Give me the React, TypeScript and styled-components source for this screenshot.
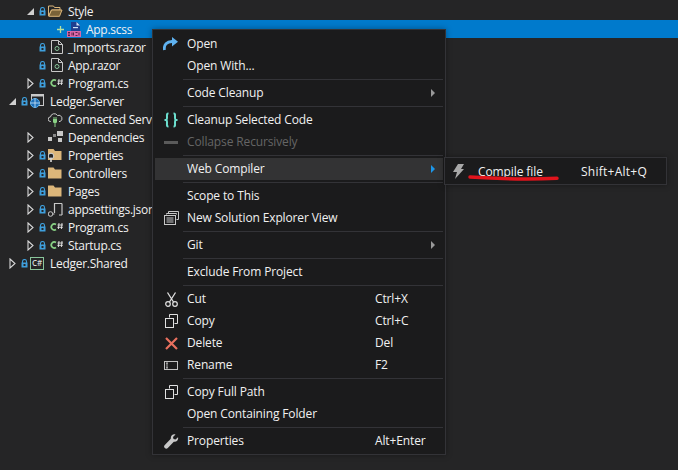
import React from "react";
import styled, { createGlobalStyle } from "styled-components";

const Global = createGlobalStyle`
  html, body { margin: 0; padding: 0; background: #252526; }
  body { font-family: "Open Sans", "Noto Sans", sans-serif; font-size: 12px; overflow: hidden; }
`;

const Page = styled.div`
  position: relative;
  width: 678px;
  height: 470px;
  overflow: hidden;
  background: #252526;
  color: #f1f1f1;
`;

const Tree = styled.div`
  display: flex;
  flex-direction: column;
  padding-top: 2px;
`;

const Row = styled.div<{ $depth: number; $selected?: boolean }>`
  display: flex;
  align-items: center;
  height: 18px;
  padding-left: ${(p) => p.$depth}px;
  background: ${(p) => (p.$selected ? "#007acc" : "transparent")};
  white-space: nowrap;
`;

const Slot = styled.span<{ $w: number }>`
  display: inline-flex;
  align-items: center;
  justify-content: center;
  width: ${(p) => p.$w}px;
  height: 18px;
  flex: none;
`;

const RowLabel = styled.span`
  margin-left: 3px;
  font-size: 12px;
  letter-spacing: -0.28px;
  color: #f1f1f1;
`;

const Menu = styled.div`
  position: absolute;
  left: 152px;
  top: 29px;
  width: 294px;
  box-sizing: border-box;
  padding: 3px 2px 2px;
  background: #1b1b1c;
  border: 1px solid #333337;
  box-shadow: 0 0 6px rgba(0, 0, 0, 0.35);
  display: flex;
  flex-direction: column;
`;

const Item = styled.div<{ $hover?: boolean; $disabled?: boolean }>`
  display: grid;
  grid-template-columns: 32px 188px 1fr 12px;
  grid-template-rows: 22px;
  align-items: start;
  height: 22px;
  line-height: 21px;
  background: ${(p) => (p.$hover ? "#333334" : "transparent")};
  color: ${(p) => (p.$disabled ? "#656565" : "#f1f1f1")};
  letter-spacing: -0.13px;
  white-space: nowrap;
`;

const IconCell = styled.span<{ $shift?: number }>`
  display: flex;
  align-items: center;
  justify-content: center;
  height: 22px;
  align-self: center;
  padding-right: ${(p) => p.$shift ?? 0}px;
`;

const Shortcut = styled.span`
  color: #f1f1f1;
`;

const SubShortcut = styled(Shortcut)`
  letter-spacing: 0.25px;
`;

const Arrow = styled.span<{ $blue?: boolean }>`
  width: 0;
  height: 0;
  border-left: 4px solid ${(p) => (p.$blue ? "#1c97ea" : "#999999")};
  border-top: 4px solid transparent;
  border-bottom: 4px solid transparent;
  justify-self: start;
  align-self: center;
`;

const Separator = styled.div`
  height: 1px;
  margin: 2px 0 2px 28px;
  background: #333337;
`;

const Submenu = styled.div`
  position: absolute;
  left: 444px;
  top: 157px;
  width: 223px;
  height: 28px;
  box-sizing: border-box;
  padding: 2px 2px;
  background: #1b1b1c;
  border: 1px solid #333337;
  box-shadow: 0 0 6px rgba(0, 0, 0, 0.35);
  display: grid;
  grid-template-columns: 31px 103px 1fr;
  grid-template-rows: 22px;
  align-items: center;
  letter-spacing: -0.1px;
  white-space: nowrap;
`;

const Scribble = styled.svg`
  position: absolute;
  left: 468px;
  top: 172px;
  pointer-events: none;
`;

const SharedBox = styled.span`
  display: flex;
  align-items: center;
  justify-content: center;
  width: 14px;
  height: 11px;
  margin-right: 3px;
  border: 1px solid #89c59a;
  font-size: 8px;
  font-weight: 600;
  line-height: 1;
  color: #d8d8d8;
  letter-spacing: -0.2px;
`;

const S = { fill: "none", stroke: "#e0e0e0", strokeWidth: 1 };

const Lock = () => (
  <svg width="7" height="9" viewBox="0 0 7 9">
    <path d="M1.500 4V2.500a2 2 0 0 1 4 0V4" fill="none" stroke="#3f9fdc" strokeWidth="1.100" />
    <rect x="0.500" y="3.500" width="6" height="5" fill="#3f9fdc" />
    <rect x="2.500" y="5" width="2" height="2" fill="#252526" />
  </svg>
);

const Open = () => (
  <svg width="9" height="9" viewBox="0 0 9 9">
    <path d="M8 1V8H1Z" fill="#d0d0d0" />
  </svg>
);

const Closed = () => (
  <svg width="7" height="11" viewBox="0 0 7 11">
    <path d="M1 1L6 5.500L1 10Z" fill="#252526" stroke="#d8d8d8" strokeWidth="1.100" />
  </svg>
);

const Folder = ({ open }: { open?: boolean }) => (
  <svg width="17" height="12" viewBox="0 0 17 12">
    {open ? (
      <>
        <path d="M.5 1h5l1 1.500h5.500v2.500H3.500L.5 11z" fill="#252526" stroke="#dcb67a" />
        <path d="M.8 11.300L3.500 5H14L11.500 11.300z" fill="#7a6238" stroke="#dcb67a" />
      </>
    ) : (
      <path d="M0 .5h5.500l1.500 2h6.500v9H0z" fill="#dcb67a" />
    )}
  </svg>
);

const PropFolder = () => (
  <svg width="17" height="16" viewBox="0 0 17 16">
    <path d="M0 2h5.500l1.500 2h6.500v9H0z" fill="#dcb67a" />
    <circle cx="3" cy="9" r="2.800" fill="#252526" stroke="#d8d8d8" />
    <rect x="2.200" y="10.500" width="1.600" height="4.500" fill="#d8d8d8" />
  </svg>
);

const Razor = () => (
  <svg width="12" height="14" viewBox="0 0 12 14">
    <path d="M.5.5h7l4 4v9H.5z" fill="#252526" stroke="#c8c8c8" />
    <path d="M7.500.5v4h4" fill="none" stroke="#c8c8c8" />
    <circle cx="6" cy="8.500" r="2" fill="none" stroke="#89c59a" />
  </svg>
);

const CSharp = () => (
  <svg width="14" height="10" viewBox="0 0 14 10">
    <path d="M6 2.500A3 3 0 1 0 6 7.500" fill="none" stroke="#89d185" strokeWidth="1.800" />
    <path d="M9 1l-.6 6M12 1l-.6 6M7.500 3h5.500M7.300 5.300h5.500" stroke="#e8e8e8" strokeWidth=".9" fill="none" />
  </svg>
);

const Sass = () => (
  <svg width="15" height="15" viewBox="0 0 15 15">
    <path d="M4 0h6l3 3v7H4z" fill="#1f3f8f" />
    <path d="M9.500 0v3.500h3.500z" fill="#cfe3f7" />
    <rect x="6" y="5" width="5" height="1.200" fill="#cfe3f7" />
    <rect x="0" y="9" width="14" height="6" fill="#d868a8" />
    <path d="M1 10.500h2M1 12h2M1 13.500h2M5 10.500v3M6.500 10.500v3M8.500 10.500h2M8.500 13.500h2M12 10.500v3" stroke="#3a1030" strokeWidth=".8" />
  </svg>
);

const Web = () => (
  <svg width="14" height="14" viewBox="0 0 14 14" style={{ marginRight: 3 }}>
    <rect x="1.500" y=".5" width="12" height="11" fill="#252526" stroke="#c8c8c8" />
    <rect x="1.500" y=".5" width="12" height="2" fill="#c8c8c8" />
    <circle cx="5" cy="9" r="4.500" fill="#1e6fb8" stroke="#5cb0ea" />
    <path d="M.5 9h9M5 4.500v9" stroke="#cfe8fa" strokeWidth=".8" />
  </svg>
);

const Cloud = () => (
  <svg width="17" height="15" viewBox="0 0 17 15">
    <path d="M3 9.500H2.500a2.300 2.300 0 0 1 0-4.600 3.800 3.800 0 0 1 7-1.400A3.200 3.200 0 0 1 12 9.500h-1" fill="none" stroke="#c8c8c8" />
    <path d="M5 7h4v2.500a2 2 0 0 1-4 0z" fill="#89d185" />
    <path d="M7 11.500V15M6 5v2M8 5v2" stroke="#89d185" />
  </svg>
);

const Deps = () => (
  <svg width="17" height="12" viewBox="0 0 17 12">
    <rect x="9" y="0" width="6" height="5" fill="#c8c8c8" />
    <rect x="10" y="7" width="4" height="4" fill="#c8c8c8" />
    <rect x="0" y="6" width="4" height="4" fill="#c8c8c8" />
    <rect x="5" y="3" width="3" height="3" fill="#888" />
  </svg>
);

const JsonFile = () => (
  <svg width="17" height="15" viewBox="0 0 17 15">
    <path d="M6.500 11V1.500h7.500M14 1.500V13" fill="none" stroke="#c8c8c8" strokeWidth="1.200" />
    <path d="M14 13h-3" stroke="#c8c8c8" />
    <circle cx="2.500" cy="12" r="2.300" fill="none" stroke="#c8c8c8" />
    <path d="M5 12h1.500" stroke="#c8c8c8" />
  </svg>
);

const SharedProject = () => <SharedBox>C#</SharedBox>;

const Plus = () => (
  <svg width="7" height="7" viewBox="0 0 7 7">
    <path d="M0 3.500h7M3.500 0v7" stroke="#b5e0a0" strokeWidth="1.300" />
  </svg>
);

const IOpen = () => (
  <svg width="16" height="14" viewBox="0 0 16 14">
    <path d="M1.500 13C.5 7.500 4 4.500 9 4.500" fill="none" stroke="#5fb2f0" strokeWidth="2.800" />
    <path d="M9 0L15 4.800L9 9.500Z" fill="#5fb2f0" />
  </svg>
);

const IBraces = () => (
  <svg width="16" height="16" viewBox="0 0 16 16">
    <path d="M5.500 1.500C3.500 1.500 4 3 4 5.500S3.500 8 1.500 8c2 0 2.500.0 2.500 2.500s-.5 4 1.500 4" fill="none" stroke="#6de0cf" strokeWidth="2" />
    <path d="M10.500 1.500c2 0 1.500 1.500 1.500 4S12.500 8 14.500 8c-2 0-2.500 0-2.500 2.500s.5 4-1.500 4" fill="none" stroke="#6de0cf" strokeWidth="2" />
  </svg>
);

const ICollapse = () => (
  <svg width="14" height="3" viewBox="0 0 14 3">
    <rect width="14" height="3" fill="#5a5a5a" />
  </svg>
);

const INewWin = () => (
  <svg width="15" height="14" viewBox="0 0 15 14">
    <path d="M4.500 2.500V.5h10v8h-2M2.500 3.500V2.500h10v1" fill="none" stroke="#c8c8c8" />
    <rect x=".5" y="4.500" width="11" height="9" fill="#1b1b1c" stroke="#c8c8c8" />
    <path d="M2.500 7h7M2.500 9h7M2.500 11h7" stroke="#c8c8c8" />
  </svg>
);

const ICut = () => (
  <svg width="13" height="15" viewBox="0 0 13 15">
    <path d="M2.500 .5l6 9.500M10.500 .5l-6 9.500" {...S} strokeWidth={1.300} />
    <circle cx="3" cy="12" r="2.300" {...S} strokeWidth={1.200} />
    <circle cx="10" cy="12" r="2.300" {...S} strokeWidth={1.200} />
  </svg>
);

const ICopy = () => (
  <svg width="13" height="14" viewBox="0 0 13 14">
    <path d="M4.500 3.500V.5h8v9h-3" {...S} />
    <rect x=".5" y="4.500" width="8" height="9" {...S} />
  </svg>
);

const IDelete = () => (
  <svg width="13" height="13" viewBox="0 0 13 13">
    <path d="M1 1l11 11M12 1L1 12" fill="none" stroke="#e9705e" strokeWidth="2.200" />
  </svg>
);

const IRename = () => (
  <svg width="14" height="9" viewBox="0 0 14 9">
    <rect x=".5" y=".5" width="13" height="8" {...S} stroke="#c0c0c0" />
    <path d="M2 2h1v5H2M4 2H3M4 7H3" {...S} strokeWidth={0.800} />
  </svg>
);

const IWrench = () => (
  <svg width="15" height="15" viewBox="0 0 15 15">
    <path d="M14 3.200l-2.500 2.300-2-.5-.5-2L11.500.5C9 -.2 6.500 1.500 6.800 4.800L.8 11a2 2 0 0 0 3 3l6-6.200c3 .5 5-2 4.200-4.600z" fill="#c8c8c8" />
  </svg>
);

const IBolt = () => (
  <svg width="11" height="15" viewBox="0 0 11 15">
    <path d="M5 0h6L8 5h3L2 15l2-7H0z" fill="#a8a8a8" />
  </svg>
);

type TreeRow = {
  depth: number;
  expander?: "open" | "closed";
  lock?: boolean;
  plus?: boolean;
  icon: React.ReactNode;
  label: string;
  selected?: boolean;
};

const rows: TreeRow[] = [
  { depth: 24, expander: "open", lock: true, icon: <Folder open />, label: "Style" },
  { depth: 42, plus: true, icon: <Sass />, label: "App.scss", selected: true },
  { depth: 24, lock: true, icon: <Razor />, label: "_Imports.razor" },
  { depth: 24, lock: true, icon: <Razor />, label: "App.razor" },
  { depth: 24, expander: "closed", lock: true, icon: <CSharp />, label: "Program.cs" },
  { depth: 6, expander: "open", lock: true, icon: <Web />, label: "Ledger.Server" },
  { depth: 24, icon: <Cloud />, label: "Connected Services" },
  { depth: 24, expander: "closed", icon: <Deps />, label: "Dependencies" },
  { depth: 24, expander: "closed", lock: true, icon: <PropFolder />, label: "Properties" },
  { depth: 24, expander: "closed", lock: true, icon: <Folder />, label: "Controllers" },
  { depth: 24, expander: "closed", lock: true, icon: <Folder />, label: "Pages" },
  { depth: 24, expander: "closed", lock: true, icon: <JsonFile />, label: "appsettings.json" },
  { depth: 24, expander: "closed", lock: true, icon: <CSharp />, label: "Program.cs" },
  { depth: 24, expander: "closed", lock: true, icon: <CSharp />, label: "Startup.cs" },
  { depth: 6, expander: "closed", lock: true, icon: <SharedProject />, label: "Ledger.Shared" },
];

type MenuEntry =
  | "sep"
  | { label: string; icon?: React.ReactNode; shortcut?: string; sub?: boolean; hover?: boolean; disabled?: boolean };

const entries: MenuEntry[] = [
  { label: "Open", icon: <IOpen /> },
  { label: "Open With..." },
  "sep",
  { label: "Code Cleanup", sub: true },
  "sep",
  { label: "Cleanup Selected Code", icon: <IBraces /> },
  { label: "Collapse Recursively", icon: <ICollapse />, disabled: true },
  "sep",
  { label: "Web Compiler", sub: true, hover: true },
  "sep",
  { label: "Scope to This" },
  { label: "New Solution Explorer View", icon: <INewWin /> },
  "sep",
  { label: "Git", sub: true },
  "sep",
  { label: "Exclude From Project" },
  "sep",
  { label: "Cut", icon: <ICut />, shortcut: "Ctrl+X" },
  { label: "Copy", icon: <ICopy />, shortcut: "Ctrl+C" },
  { label: "Delete", icon: <IDelete />, shortcut: "Del" },
  { label: "Rename", icon: <IRename />, shortcut: "F2" },
  "sep",
  { label: "Copy Full Path", icon: <ICopy /> },
  { label: "Open Containing Folder" },
  "sep",
  { label: "Properties", icon: <IWrench />, shortcut: "Alt+Enter" },
];

export default function App() {
  return (
    <Page>
      <Global />
      <Tree>
        {rows.map((r, i) => (
          <Row key={i} $depth={r.depth} $selected={r.selected}>
            <Slot $w={12}>{r.expander === "open" ? <Open /> : r.expander === "closed" ? <Closed /> : null}</Slot>
            <Slot $w={12}>{r.lock ? <Lock /> : r.plus ? <Plus /> : null}</Slot>
            <Slot $w={17}>{r.icon}</Slot>
            <RowLabel>{r.label}</RowLabel>
          </Row>
        ))}
      </Tree>
      <Menu>
        {entries.map((e, i) =>
          e === "sep" ? (
            <Separator key={i} />
          ) : (
            <Item key={i} $hover={e.hover} $disabled={e.disabled}>
              <IconCell>{e.icon}</IconCell>
              <span>{e.label}</span>
              <Shortcut>{e.shortcut}</Shortcut>
              {e.sub ? <Arrow $blue={e.hover} /> : <span />}
            </Item>
          ),
        )}
      </Menu>
      <Submenu>
        <IconCell $shift={8}>
          <IBolt />
        </IconCell>
        <span>Compile file</span>
        <SubShortcut>Shift+Alt+Q</SubShortcut>
      </Submenu>
      <Scribble width="92" height="12" viewBox="0 0 92 12">
        <path d="M2 5C25 6.500 60 7.500 89 6.300" fill="none" stroke="#e0141c" strokeWidth="3.500" strokeLinecap="round" />
      </Scribble>
    </Page>
  );
}
